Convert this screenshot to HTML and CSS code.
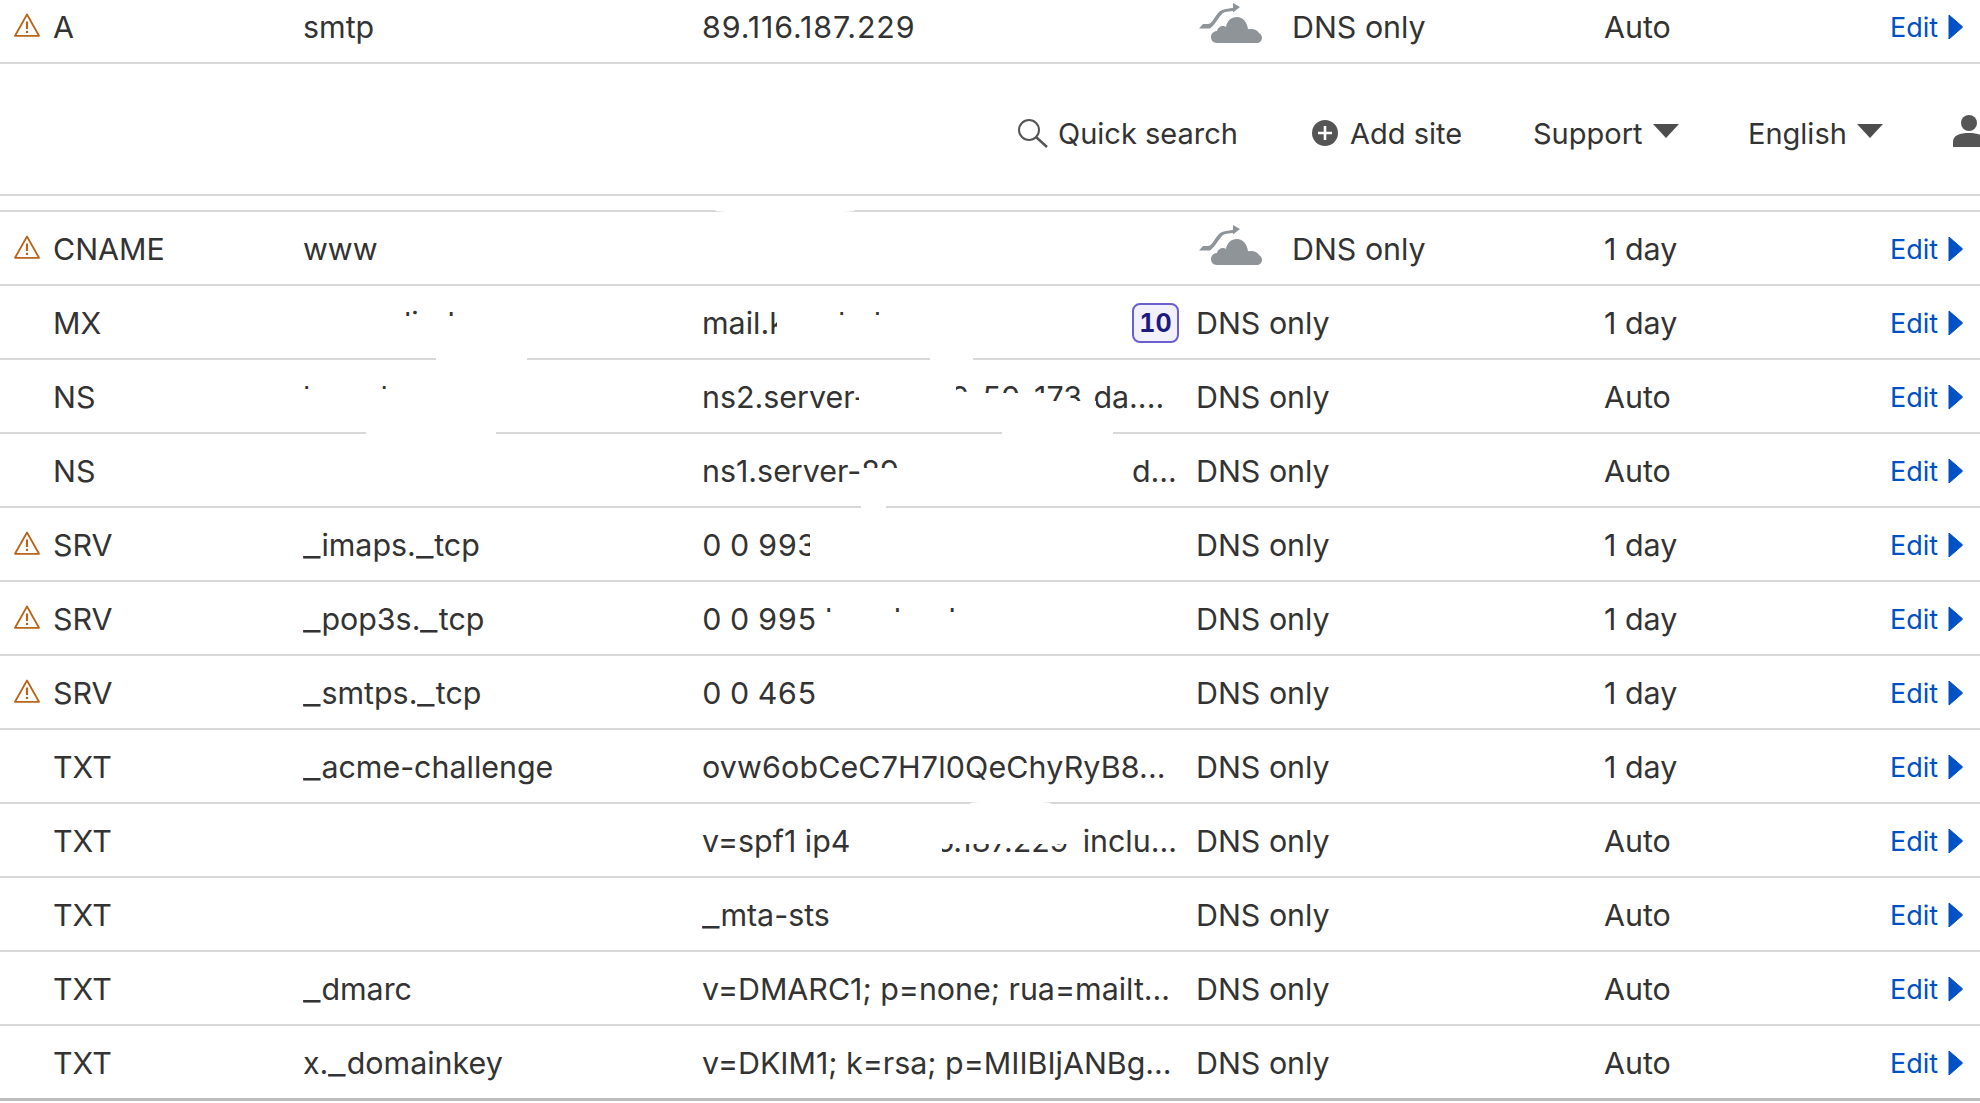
FILE: index.html
```html
<!DOCTYPE html>
<html lang="en">
<head>
<meta charset="utf-8">
<title>DNS records</title>
<link rel="stylesheet" href="styles.css">
</head>
<body>
<svg class="defs" width="0" height="0" aria-hidden="true">
  <symbol id="warn" viewBox="0 0 26 24">
    <path d="M13 1.5 L25 22.8 H1 Z" fill="none" stroke="currentColor" stroke-width="1.8" stroke-linejoin="round"/>
    <path d="M13 8.5 V16" stroke="currentColor" stroke-width="2.2"/>
    <path d="M13 17.8 V20" stroke="currentColor" stroke-width="2.2"/>
  </symbol>
  <symbol id="cloud" viewBox="0 0 64 41">
    <path d="M18 40 C14 40 12 37 12 34 C12 30.5 15 28 18 28 C18.5 25 21.5 23 24 23 C25 23 26 23 27 24 C28 18 32 14 38 14 C44 14 48 19 49 26 C50 26.3 51 26 52 26 C56 26 59 28 60 30 C62 31 63 33 63 35 C63 38 60 40 58 40 Z" fill="currentColor"/>
    <path d="M0 25.5 L4 21 H9 C13 21 16 13 20 9 C22.5 6.5 26 6 34 5 V0 L41 4 L34 9.500 V8 C27 8.500 25 9 23 11 C19 15 16 22 11 25.500 Z" fill="currentColor"/>
  </symbol>
  <symbol id="next" viewBox="0 0 15 26">
    <path d="M1 1 L14.200 12.500 Q14.800 13 14.200 13.500 L1 25 Z" fill="currentColor" stroke="currentColor" stroke-width="1" stroke-linejoin="round"/>
  </symbol>
  <symbol id="caret" viewBox="0 0 26 14">
    <path d="M0 0 H26 L13 14 Z" fill="currentColor"/>
  </symbol>
</svg>

<div class="sheet">
  <div class="row">
    <svg class="warn"><use href="#warn"/></svg>
    <div class="type">A</div>
    <div class="name">smtp</div>
    <div class="content ip">89.116.187.229</div>
    <div class="status"><svg class="cloud"><use href="#cloud"/></svg>DNS only</div>
    <div class="ttl">Auto</div>
    <div class="edit">Edit<svg class="next"><use href="#next"/></svg></div>
  </div>

  <header class="topbar">
    <div class="tool tool-search">
      <svg class="search" viewBox="0 0 31 30"><circle cx="12" cy="12" r="10" fill="none" stroke="#555" stroke-width="2"/><path d="M19 19 L30 29" stroke="#555" stroke-width="2.400"/></svg>
      Quick search
    </div>
    <div class="tool tool-add">
      <svg class="plus" viewBox="0 0 26 26"><circle cx="13" cy="13" r="13" fill="#555"/><path d="M13 6 V20 M6 13 H20" stroke="#fff" stroke-width="2.600"/></svg>
      Add site
    </div>
    <div class="tool tool-support">Support<svg class="caret"><use href="#caret"/></svg></div>
    <div class="tool tool-lang">English<svg class="caret"><use href="#caret"/></svg></div>
    <svg class="user" viewBox="0 0 27 32"><circle cx="16" cy="8" r="8" fill="#555"/><path d="M0 32 V27 C0 20 7 18 16 18 C25 18 32 20 32 27 V32 Z" fill="#555"/></svg>
  </header>

  <div class="spacer"></div>

  <div class="row">
    <svg class="warn"><use href="#warn"/></svg>
    <div class="type">CNAME</div>
    <div class="name">www</div>
    <div class="content"></div>
    <div class="status"><svg class="cloud"><use href="#cloud"/></svg>DNS only</div>
    <div class="ttl">1 day</div>
    <div class="edit">Edit<svg class="next"><use href="#next"/></svg></div>
  </div>
  <div class="row">
    <div class="type">MX</div>
    <div class="name">mail.kaliedos.ru</div>
    <div class="content"><span>mail.kanalral.ru</span><span class="badge">10</span></div>
    <div class="status">DNS only</div>
    <div class="ttl">1 day</div>
    <div class="edit">Edit<svg class="next"><use href="#next"/></svg></div>
  </div>
  <div class="row">
    <div class="type">NS</div>
    <div class="name">kamal.ru</div>
    <div class="content">ns2.server-119-116-50-173&hairsp;.da....</div>
    <div class="status">DNS only</div>
    <div class="ttl">Auto</div>
    <div class="edit">Edit<svg class="next"><use href="#next"/></svg></div>
  </div>
  <div class="row">
    <div class="type">NS</div>
    <div class="name"></div>
    <div class="content">ns1.server-89-116-187-229-8&hairsp;.d...</div>
    <div class="status">DNS only</div>
    <div class="ttl">Auto</div>
    <div class="edit">Edit<svg class="next"><use href="#next"/></svg></div>
  </div>
  <div class="row">
    <svg class="warn"><use href="#warn"/></svg>
    <div class="type">SRV</div>
    <div class="name"><span class="us">_</span>imaps.<span class="us">_</span>tcp</div>
    <div class="content num">0 0 993</div>
    <div class="status">DNS only</div>
    <div class="ttl">1 day</div>
    <div class="edit">Edit<svg class="next"><use href="#next"/></svg></div>
  </div>
  <div class="row">
    <svg class="warn"><use href="#warn"/></svg>
    <div class="type">SRV</div>
    <div class="name"><span class="us">_</span>pop3s.<span class="us">_</span>tcp</div>
    <div class="content num">0 0 995 kanal.ard</div>
    <div class="status">DNS only</div>
    <div class="ttl">1 day</div>
    <div class="edit">Edit<svg class="next"><use href="#next"/></svg></div>
  </div>
  <div class="row">
    <svg class="warn"><use href="#warn"/></svg>
    <div class="type">SRV</div>
    <div class="name"><span class="us">_</span>smtps.<span class="us">_</span>tcp</div>
    <div class="content num">0 0 465</div>
    <div class="status">DNS only</div>
    <div class="ttl">1 day</div>
    <div class="edit">Edit<svg class="next"><use href="#next"/></svg></div>
  </div>
  <div class="row">
    <div class="type">TXT</div>
    <div class="name"><span class="us">_</span>acme-challenge</div>
    <div class="content wide">ovw6obCeC7H7l0QeChyRyB8...</div>
    <div class="status">DNS only</div>
    <div class="ttl">1 day</div>
    <div class="edit">Edit<svg class="next"><use href="#next"/></svg></div>
  </div>
  <div class="row">
    <div class="type">TXT</div>
    <div class="name"></div>
    <div class="content">v=spf1 ip4: 89.116.187.229&thinsp; inclu...</div>
    <div class="status">DNS only</div>
    <div class="ttl">Auto</div>
    <div class="edit">Edit<svg class="next"><use href="#next"/></svg></div>
  </div>
  <div class="row">
    <div class="type">TXT</div>
    <div class="name"></div>
    <div class="content"><span><span class="us">_</span>mta-sts</span></div>
    <div class="status">DNS only</div>
    <div class="ttl">Auto</div>
    <div class="edit">Edit<svg class="next"><use href="#next"/></svg></div>
  </div>
  <div class="row">
    <div class="type">TXT</div>
    <div class="name"><span class="us">_</span>dmarc</div>
    <div class="content">v=DMARC1; p=none; rua=mailt...</div>
    <div class="status">DNS only</div>
    <div class="ttl">Auto</div>
    <div class="edit">Edit<svg class="next"><use href="#next"/></svg></div>
  </div>
  <div class="row row-last">
    <div class="type">TXT</div>
    <div class="name">x.<span class="us">_</span>domainkey</div>
    <div class="content">v=DKIM1; k=rsa; p=MIIBIjANBg...</div>
    <div class="status">DNS only</div>
    <div class="ttl">Auto</div>
    <div class="edit">Edit<svg class="next"><use href="#next"/></svg></div>
  </div>

  <div class="blot b1"></div>
  <div class="blot b2"></div>
  <div class="blot b2b"></div>
  <div class="blot b3"></div>
  <div class="blot b3b"></div>
  <div class="blot b3c"></div>
  <div class="blot b4"></div>
  <div class="blot b4b"></div>
  <div class="blot b5"></div>
  <div class="blot b6"></div>
  <div class="blot b6b"></div>
  <div class="blot b7"></div>
  <div class="blot b8"></div>
  <div class="blot b9"></div>
  <div class="blot b9b"></div>
  <div class="blot b9c"></div>
  <div class="blot b10"></div>
  <div class="blot b11"></div>
  <div class="blot b12"></div>
  <div class="blot b13"></div>
  <div class="blot b14"></div>
</div>
</body>
</html>
```
FILE: styles.css
```css
* { box-sizing: border-box; }
html, body { margin: 0; padding: 0; background: #fff; overflow: hidden; height: 1103px; }
body { font-family: Inter, "Noto Sans", sans-serif; font-size: 30.4px; color: #333; }
.defs { position: absolute; }
.sheet { position: relative; width: 1980px; height: 1103px; overflow: hidden; margin: 0; }

.row {
  height: 74px;
  margin: 0;
  padding-top: 1px;
  border-bottom: 2px solid #d8d8d8;
  display: grid;
  grid-template-columns: 14px 39px 250px 399px 494px 408px 286px 90px;
  align-items: center;
  white-space: nowrap;
}
.row:first-child { margin-top: -10px; }
.row-last { border-bottom: 3px solid #bdbdbd; height: 75px; }

.warn { grid-column: 2; grid-row: 1; width: 26px; height: 24px; color: #b8651b; display: block; margin-top: -3px; }
.type { grid-column: 3; grid-row: 1; }
.name { grid-column: 4; grid-row: 1; }
.content { grid-column: 5; grid-row: 1; display: flex; align-items: center; justify-content: space-between; padding-right: 17px; }
.num { font-variant-numeric: tabular-nums; }
.ip { letter-spacing: 0.900px; }
.wide { letter-spacing: 0.150px; }
.us { display: inline-block; margin-right: 4.500px; transform: scaleX(1.260); transform-origin: left center; }
.status { grid-column: 6; grid-row: 1; display: flex; align-items: center; }
.ttl { grid-column: 7; grid-row: 1; }
.edit { grid-column: 8; grid-row: 1; color: #0051c3; font-size: 27px; display: flex; align-items: center; gap: 10px; padding-top: 2px; }

.cloud { width: 64px; height: 41px; color: #8f9499; margin: -7px 29px 0 3px; flex: none; }
.next { width: 15px; height: 26px; flex: none; margin-top: -2px; }

.badge {
  width: 47px; height: 40px;
  border: 2px solid #6a5fcf;
  border-radius: 8px;
  background: #f2f0fd;
  color: #1d1a7f;
  font-size: 25px;
  font-weight: 700;
  font-variant-numeric: tabular-nums;
  display: flex; align-items: center; justify-content: center;
}

.topbar {
  height: 132px;
  border-bottom: 2px solid #d8d8d8;
  display: flex;
  align-items: center;
  padding-left: 1017px;
  padding-top: 8px;
  font-size: 29px;
  white-space: nowrap;
}
.tool { display: flex; align-items: center; flex: none; }
.search { width: 31px; height: 30px; margin: 0 10px 0 0; flex: none; }
.plus { width: 26px; height: 26px; margin: 0 12px 0 0; flex: none; }
.caret { width: 26px; height: 14px; color: #4d4d4d; margin: -4px 0 0 10px; flex: none; }
.tool-search { width: 295px; }
.tool-add { width: 221px; }
.tool-support { width: 215px; }
.tool-lang { width: 205px; }
.user { width: 27px; height: 32px; flex: none; margin-top: -4px; }

.spacer { height: 16px; border-bottom: 2px solid #d8d8d8; }

.blot { position: absolute; background: #fff; }
.b1 { left: 715px; top: 208px; width: 140px; height: 5px; border-radius: 50%; }
.b2 { left: 303px; top: 300px; width: 76px; height: 50px; }
.b2b { left: 379px; top: 316px; width: 170px; height: 40px; }
.b3 { left: 777px; top: 315px; width: 350px; height: 41px; }
.b3b { left: 436px; top: 357px; width: 91px; height: 5px; }
.b3c { left: 930px; top: 357px; width: 43px; height: 5px; }
.b4 { left: 303px; top: 389px; width: 100px; height: 42px; }
.b4b { left: 392px; top: 376px; width: 180px; height: 56px; }
.b5 { left: 859px; top: 362px; width: 97px; height: 69px; }
.b6 { left: 956px; top: 393px; width: 95px; height: 38px; }
.b6b { left: 1051px; top: 401px; width: 45px; height: 30px; }
.b7 { left: 366px; top: 431px; width: 130px; height: 6px; }
.b8 { left: 1002px; top: 431px; width: 111px; height: 6px; }
.b9 { left: 860px; top: 468px; width: 40px; height: 37px; }
.b9b { left: 899px; top: 450px; width: 234px; height: 55px; }
.b9c { left: 861px; top: 504px; width: 25px; height: 5px; }
.b10 { left: 810px; top: 520px; width: 60px; height: 50px; }
.b11 { left: 820px; top: 612px; width: 230px; height: 35px; }
.b12 { left: 852px; top: 825px; width: 90px; height: 35px; }
.b13 { left: 941px; top: 815px; width: 141px; height: 29px; }
.b14 { left: 970px; top: 801px; width: 81px; height: 5px; border-radius: 50%; }
```
